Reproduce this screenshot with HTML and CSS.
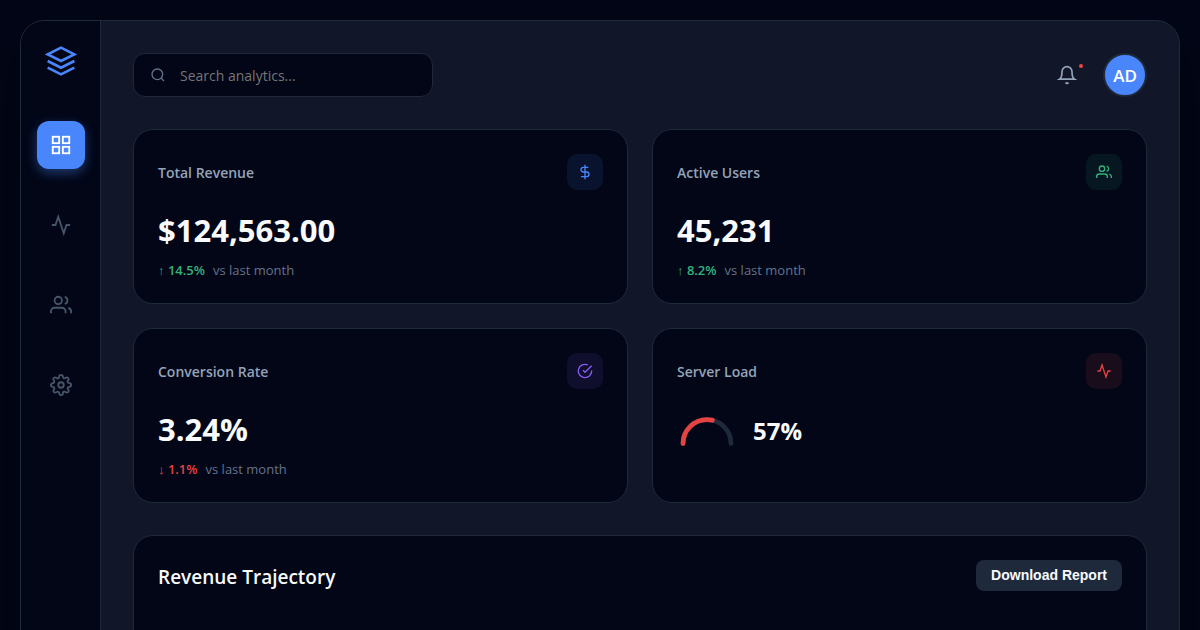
FILE: index.html
```html
<!DOCTYPE html>
<html lang="en">
<head>
  <meta charset="UTF-8" />
  <meta name="viewport" content="width=device-width, initial-scale=1.0"/>
  <title>Analytics Dashboard</title>
  <link rel="stylesheet" href="styles.css">
</head>
<body>

  <div class="dashboard">

    <!-- SIDEBAR -->
    <aside class="sidebar">
      <a href="#" class="logo" aria-label="Home">
        <svg class="icon" width="32" height="32" viewBox="0 0 24 24"><polygon points="12 2 2 7 12 12 22 7 12 2"/><polyline points="2 17 12 22 22 17"/><polyline points="2 12 12 17 22 12"/></svg>
      </a>
      <nav class="nav">
        <a href="#" class="nav-item active" aria-label="Overview">
          <svg class="icon" width="22" height="22" viewBox="0 0 24 24"><rect x="3" y="3" width="7" height="7"/><rect x="14" y="3" width="7" height="7"/><rect x="14" y="14" width="7" height="7"/><rect x="3" y="14" width="7" height="7"/></svg>
        </a>
        <a href="#" class="nav-item" aria-label="Activity">
          <svg class="icon" width="22" height="22" viewBox="0 0 24 24"><polyline points="22 12 18 12 15 21 9 3 6 12 2 12"/></svg>
        </a>
        <a href="#" class="nav-item" aria-label="Users">
          <svg class="icon" width="22" height="22" viewBox="0 0 24 24"><path d="M17 21v-2a4 4 0 0 0-4-4H5a4 4 0 0 0-4 4v2"/><circle cx="9" cy="7" r="4"/><path d="M23 21v-2a4 4 0 0 0-3-3.87"/><path d="M16 3.13a4 4 0 0 1 0 7.75"/></svg>
        </a>
        <a href="#" class="nav-item" aria-label="Settings">
          <svg class="icon" width="22" height="22" viewBox="0 0 24 24"><circle cx="12" cy="12" r="3"/><path d="M19.4 15a1.65 1.65 0 0 0 .33 1.82l.06.06a2 2 0 0 1 0 2.83 2 2 0 0 1-2.83 0l-.06-.06a1.65 1.65 0 0 0-1.82-.33 1.65 1.65 0 0 0-1 1.51V21a2 2 0 0 1-2 2 2 2 0 0 1-2-2v-.09A1.65 1.65 0 0 0 9 19.4a1.65 1.65 0 0 0-1.82.33l-.06.06a2 2 0 0 1-2.83 0 2 2 0 0 1 0-2.83l.06-.06a1.65 1.65 0 0 0 .33-1.82 1.65 1.65 0 0 0-1.51-1H3a2 2 0 0 1-2-2 2 2 0 0 1 2-2h.09A1.65 1.65 0 0 0 4.6 9a1.65 1.65 0 0 0-.33-1.82l-.06-.06a2 2 0 0 1 0-2.83 2 2 0 0 1 2.83 0l.06.06a1.65 1.65 0 0 0 1.82.33H9a1.65 1.65 0 0 0 1-1.51V3a2 2 0 0 1 2-2 2 2 0 0 1 2 2v.09a1.65 1.65 0 0 0 1 1.51 1.65 1.65 0 0 0 1.82-.33l.06-.06a2 2 0 0 1 2.83 0 2 2 0 0 1 0 2.83l-.06.06a1.65 1.65 0 0 0-.33 1.82V9a1.65 1.65 0 0 0 1.51 1H21a2 2 0 0 1 2 2 2 2 0 0 1-2 2h-.09a1.65 1.65 0 0 0-1.51 1z"/></svg>
        </a>
      </nav>
    </aside>

    <!-- MAIN -->
    <main class="main">
      <header class="header">
        <label class="search">
          <svg class="icon" width="16" height="16" viewBox="0 0 24 24"><circle cx="11" cy="11" r="8"/><line x1="21" y1="21" x2="16.65" y2="16.65"/></svg>
          <input type="text" placeholder="Search analytics..." aria-label="Search analytics">
        </label>
        <div class="profile">
          <button class="bell" type="button" aria-label="Notifications">
            <svg class="icon" width="20" height="20" viewBox="0 0 24 24"><path d="M18 8A6 6 0 0 0 6 8c0 7-3 9-3 9h18s-3-2-3-9"/><path d="M13.73 21a2 2 0 0 1-3.46 0"/></svg>
            <span class="dot"></span>
          </button>
          <div class="avatar">AD</div>
        </div>
      </header>

      <section class="stats">
        <div class="card">
          <div class="card-header">
            <span class="card-title">Total Revenue</span>
            <div class="card-icon blue">
              <svg class="icon" width="16" height="16" viewBox="0 0 24 24"><line x1="12" y1="1" x2="12" y2="23"/><path d="M17 5H9.5a3.5 3.5 0 0 0 0 7h5a3.5 3.5 0 0 1 0 7H6"/></svg>
            </div>
          </div>
          <div class="value">$124,563.00</div>
          <div class="trend"><span class="up">↑ 14.5%</span><span>vs last month</span></div>
        </div>

        <div class="card">
          <div class="card-header">
            <span class="card-title">Active Users</span>
            <div class="card-icon green">
              <svg class="icon" width="16" height="16" viewBox="0 0 24 24"><path d="M17 21v-2a4 4 0 0 0-4-4H5a4 4 0 0 0-4 4v2"/><circle cx="9" cy="7" r="4"/><path d="M23 21v-2a4 4 0 0 0-3-3.87"/><path d="M16 3.13a4 4 0 0 1 0 7.75"/></svg>
            </div>
          </div>
          <div class="value">45,231</div>
          <div class="trend"><span class="up">↑ 8.2%</span><span>vs last month</span></div>
        </div>

        <div class="card">
          <div class="card-header">
            <span class="card-title">Conversion Rate</span>
            <div class="card-icon purple">
              <svg class="icon" width="16" height="16" viewBox="0 0 24 24"><path d="M22 11.08V12a10 10 0 1 1-5.93-9.14"/><polyline points="22 4 12 14.01 9 11.01"/></svg>
            </div>
          </div>
          <div class="value">3.24%</div>
          <div class="trend"><span class="down">↓ 1.1%</span><span>vs last month</span></div>
        </div>

        <div class="card">
          <div class="card-header">
            <span class="card-title">Server Load</span>
            <div class="card-icon red">
              <svg class="icon" width="16" height="16" viewBox="0 0 24 24"><polyline points="22 12 18 12 15 21 9 3 6 12 2 12"/></svg>
            </div>
          </div>
          <div class="load">
            <svg class="gauge" width="60" height="36" viewBox="0 0 100 60">
              <path class="gauge-track" d="M10 51 A40 40 0 0 1 90 51"/>
              <path class="gauge-fill" pathLength="100" stroke-dasharray="57 100" d="M10 51 A40 40 0 0 1 90 51"/>
            </svg>
            <span class="load-value">57%</span>
          </div>
        </div>
      </section>

      <section class="chart-card">
        <div class="chart-header">
          <h2>Revenue Trajectory</h2>
          <button class="download" type="button">Download Report</button>
        </div>
      </section>
    </main>

  </div>

</body>
</html>
```
FILE: styles.css
```css
* {
  box-sizing: border-box;
}

body {
  margin: 0;
  padding: 20px;
  height: 100vh;
  overflow: hidden;
  background: #020617;
  color: #f8fafc;
  font-family: 'Segoe UI', 'Open Sans', sans-serif;
}

.icon {
  display: block;
  fill: none;
  stroke: currentColor;
  stroke-width: 2;
}

.dashboard {
  display: flex;
  background: #111729;
  border: 1px solid #1e293b;
  border-radius: 24px;
  overflow: hidden;
  box-shadow: 0 20px 50px rgba(0, 0, 0, 0.5);
}

/* sidebar */
.sidebar {
  flex: none;
  width: 80px;
  padding: 24px 0;
  display: flex;
  flex-direction: column;
  align-items: center;
  gap: 44px;
  background: #020617;
  border-right: 1px solid #1e293b;
}

.logo {
  color: #4a86fb;
}

.nav {
  display: flex;
  flex-direction: column;
  gap: 32px;
}

.nav-item {
  width: 48px;
  height: 48px;
  display: flex;
  align-items: center;
  justify-content: center;
  border-radius: 12px;
  color: #475569;
}

.nav-item.active {
  background: #4a86fb;
  color: #fff;
  box-shadow: 0 4px 12px rgba(74, 134, 251, 0.4);
}

/* header */
.main {
  flex: 1;
  min-width: 0;
  padding: 32px;
}

.header {
  display: flex;
  justify-content: space-between;
  align-items: center;
  margin-bottom: 32px;
}

.search {
  width: 300px;
  height: 44px;
  padding: 0 16px;
  display: flex;
  align-items: center;
  gap: 14px;
  background: #020617;
  border: 1px solid #1e293b;
  border-radius: 12px;
  color: #64748b;
}

.search input {
  flex: 1;
  min-width: 0;
  padding: 0;
  border: none;
  outline: none;
  background: transparent;
  color: #f8fafc;
  font-family: inherit;
  font-size: 14px;
}

.search input::placeholder {
  color: #757575;
}

.profile {
  display: flex;
  align-items: center;
  gap: 24px;
}

.bell {
  position: relative;
  padding: 2px;
  border: none;
  background: none;
  color: #94a3b8;
  cursor: pointer;
}

.dot {
  position: absolute;
  top: 1px;
  right: -4px;
  width: 4px;
  height: 4px;
  border-radius: 50%;
  background: #ef4444;
}

.avatar {
  width: 44px;
  height: 44px;
  display: flex;
  align-items: center;
  justify-content: center;
  border: 2px solid #1e293b;
  border-radius: 50%;
  background: #4a86fb;
  color: #fff;
  font-size: 17px;
  font-weight: 600;
}

/* stat cards */
.stats {
  display: grid;
  grid-template-columns: repeat(2, 1fr);
  gap: 24px;
  margin-bottom: 32px;
}

.card,
.chart-card {
  padding: 24px;
  background: #020617;
  border: 1px solid #1e293b;
  border-radius: 20px;
}

.card-header {
  display: flex;
  justify-content: space-between;
  align-items: center;
  margin-bottom: 16px;
}

.card-title {
  color: #94a3b8;
  font-size: 14px;
  font-weight: 600;
}

.card-icon {
  width: 36px;
  height: 36px;
  display: flex;
  align-items: center;
  justify-content: center;
  border-radius: 10px;
}

.blue {
  background: rgba(74, 134, 251, 0.1);
  color: #4a86fb;
}

.green {
  background: rgba(52, 178, 123, 0.1);
  color: #34b27b;
}

.purple {
  background: rgba(139, 92, 246, 0.1);
  color: #8b5cf6;
}

.red {
  background: rgba(239, 68, 68, 0.1);
  color: #e54343;
}

.value {
  margin-bottom: 8px;
  font-size: 31px;
  font-weight: 700;
  line-height: 48px;
}

.trend {
  display: flex;
  gap: 8px;
  color: #64748b;
  font-size: 13px;
  line-height: 17px;
}

.up,
.down {
  font-weight: 600;
}

.up {
  color: #34b27b;
}

.down {
  color: #e54343;
}

.load {
  display: flex;
  align-items: center;
  gap: 16px;
  padding-top: 8px;
}

.gauge path {
  fill: none;
  stroke-width: 8;
  stroke-linecap: round;
}

.gauge .gauge-track {
  stroke: #1e293b;
}

.gauge .gauge-fill {
  stroke: #e54343;
}

.load-value {
  font-size: 24px;
  font-weight: 700;
  line-height: 36px;
}

/* chart */
.chart-card {
  min-height: 400px;
}

.chart-header {
  display: flex;
  justify-content: space-between;
  align-items: flex-start;
}

.chart-header h2 {
  margin: 0;
  font-size: 19px;
  font-weight: 600;
  line-height: 34px;
}

.download {
  padding: 8px 15px;
  border: none;
  border-radius: 8px;
  background: #1e293b;
  color: #f8fafc;
  font-family: 'Liberation Sans', Arial, sans-serif;
  font-size: 14px;
  font-weight: 600;
  line-height: 15px;
  cursor: pointer;
}
```
